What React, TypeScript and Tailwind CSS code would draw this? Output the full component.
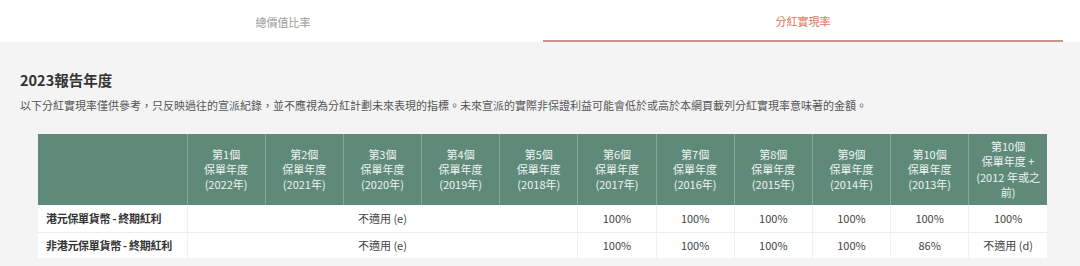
const years = [
  { n: "第1個", y: "(2022年)" },
  { n: "第2個", y: "(2021年)" },
  { n: "第3個", y: "(2020年)" },
  { n: "第4個", y: "(2019年)" },
  { n: "第5個", y: "(2018年)" },
  { n: "第6個", y: "(2017年)" },
  { n: "第7個", y: "(2016年)" },
  { n: "第8個", y: "(2015年)" },
  { n: "第9個", y: "(2014年)" },
  { n: "第10個", y: "(2013年)" },
];

const rows = [
  { label: "港元保單貨幣 - 終期紅利", values: ["100%", "100%", "100%", "100%", "100%", "100%"] },
  { label: "非港元保單貨幣 - 終期紅利", values: ["100%", "100%", "100%", "100%", "86%", "不適用 (d)"] },
];

export default function App() {
  return (
    <div
      className="w-[1080px] h-[266px] bg-[#f4f4f4] overflow-hidden text-[#444]"
      style={{ fontFamily: '"Noto Sans CJK TC", "Noto Sans", sans-serif' }}
    >
      {/* tabs */}
      <div className="bg-white h-[42px] pl-[23px] pr-[17px] flex">
        <div className="flex-1 flex items-center justify-center text-[11px] text-[#9a9a9a] pt-[2px]">
          總價值比率
        </div>
        <div className="flex-1 flex items-center justify-center text-[11px] text-[#e0775e] pt-[2px] border-b-2 border-[#c9958a]">
          分紅實現率
        </div>
      </div>

      <div className="px-[20px] pt-[28px]">
        <h2 className="text-[14.5px] leading-[20px] font-bold text-[#333]">2023報告年度</h2>
        <p className="mt-[6px] text-[11px] leading-[18px] text-[#555]">
          以下分紅實現率僅供參考，只反映過往的宣派紀錄，並不應視為分紅計劃未來表現的指標。未來宣派的實際非保證利益可能會低於或高於本網頁載列分紅實現率意味著的金額。
        </p>

        <table className="ml-[18px] mt-[20px] w-[1009px] table-fixed border-collapse bg-white text-[11px]">
          <colgroup>
            <col className="w-[149px]" />
          </colgroup>
          <thead>
            <tr className="bg-[#5f8a7a] text-[#eef4f1] h-[71px]">
              <th className="border-r border-[#86a898]"></th>
              {years.map((c) => (
                <th key={c.y} className="font-normal leading-[15px] text-center border-r border-[#86a898] px-1">
                  <div>{c.n}</div>
                  <div>保單年度</div>
                  <div>{c.y}</div>
                </th>
              ))}
              <th className="font-normal leading-[15.5px] text-center px-[6px]">
                <div>第10個</div>
                <div>保單年度 +</div>
                <div className="whitespace-nowrap">(2012 年或之</div>
                <div>前)</div>
              </th>
            </tr>
          </thead>
          <tbody>
            {rows.map((r, i) => (
              <tr key={r.label} className={i === 0 ? "h-[27px] border-b border-[#ececec]" : "h-[26px]"}>
                <td className="pl-[8px] font-bold text-[11px] tracking-[-0.3px] whitespace-nowrap text-[#333] border-r border-[#f0f0f0]">
                  {r.label}
                </td>
                <td colSpan={5} className="text-center border-r border-[#f0f0f0]">
                  不適用 (e)
                </td>
                {r.values.map((v, j) => (
                  <td key={j} className="text-center border-r border-[#f0f0f0] last:border-r-0">
                    {v}
                  </td>
                ))}
              </tr>
            ))}
          </tbody>
        </table>
      </div>
    </div>
  );
}
